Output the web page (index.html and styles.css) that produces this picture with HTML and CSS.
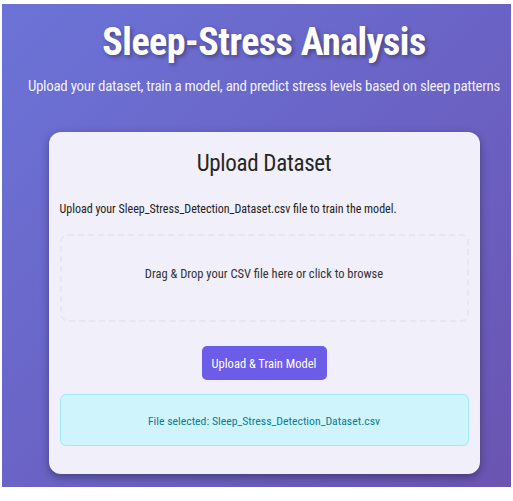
FILE: index.html
```html
<!DOCTYPE html>
<html lang="en">
<head>
<meta charset="utf-8">
<title>Sleep-Stress Analysis</title>
<link rel="stylesheet" href="styles.css">
</head>
<body>
  <div class="page">
    <header class="hero">
      <h1 class="title">Sleep-Stress Analysis</h1>
      <p class="subtitle">Upload your dataset, train a model, and predict stress levels based on sleep patterns</p>
    </header>
    <section class="card">
      <h2 class="card-title">Upload Dataset</h2>
      <p class="card-text">Upload your Sleep_Stress_Detection_Dataset.csv file to train the model.</p>
      <div class="dropzone">Drag &amp; Drop your CSV file here or click to browse</div>
      <div class="actions">
        <button class="btn" type="button">Upload &amp; Train Model</button>
      </div>
      <div class="alert">File selected: Sleep_Stress_Detection_Dataset.csv</div>
    </section>
  </div>
</body>
</html>
```

FILE: styles.css
```css
* { box-sizing: border-box; }
html, body { margin: 0; padding: 0; background: #ffffff; }
body {
  font-family: "Roboto Condensed", "Liberation Sans", sans-serif;
  padding: 4px 2px 14px 2px;
}
.page {
  height: 483px;
  background: linear-gradient(135deg, #6c73d7 0%, #6a62c4 55%, #6a55b1 100%);
  padding: 18px 0 0 15px;
  display: flex;
  flex-direction: column;
  align-items: center;
}
.hero { text-align: center; color: #fff; white-space: nowrap; }
.title {
  margin: 0;
  font-size: 38px;
  font-weight: 700;
  letter-spacing: -0.5px;
  line-height: 40px;
  text-shadow: 2px 2px 4px rgba(0,0,0,0.35);
}
.subtitle {
  margin: 14px 0 0 0;
  font-size: 15px;
  letter-spacing: -0.3px;
  line-height: 20px;
  color: rgba(255,255,255,0.92);
}
.card {
  margin-top: 36px;
  width: 431px;
  height: 342px;
  background: #f1eff9;
  border-radius: 12px;
  box-shadow: 0 3px 8px rgba(0,0,0,0.35);
  padding: 18px 11px 0 11px;
}
.card-title {
  margin: 0;
  text-align: center;
  font-size: 23px;
  font-weight: 400;
  letter-spacing: -0.3px;
  line-height: 28px;
  color: #262626;
}
.card-text {
  margin: 23px 0 0 0;
  font-size: 12px;
  line-height: 16px;
  color: #222;
}
.dropzone {
  margin-top: 17px;
  height: 88px;
  padding-bottom: 10px;
  border: 2px dashed #e9e5f5;
  border-radius: 8px;
  display: flex;
  align-items: center;
  justify-content: center;
  font-size: 12.5px;
  color: #333;
}
.actions {
  margin-top: 24px;
  display: flex;
  justify-content: center;
}
.btn {
  width: 125px;
  height: 34px;
  border: none;
  border-radius: 5px;
  background: #6c5ce7;
  color: #fff;
  font-family: inherit;
  font-size: 12.5px;
  padding: 0;
}
.alert {
  margin-top: 14px;
  height: 52px;
  padding-top: 2px;
  background: #cff4fc;
  border: 1px solid #9eeaf9;
  border-radius: 6px;
  display: flex;
  align-items: center;
  justify-content: center;
  font-size: 11.75px;
  color: #0a7c91;
}
```
